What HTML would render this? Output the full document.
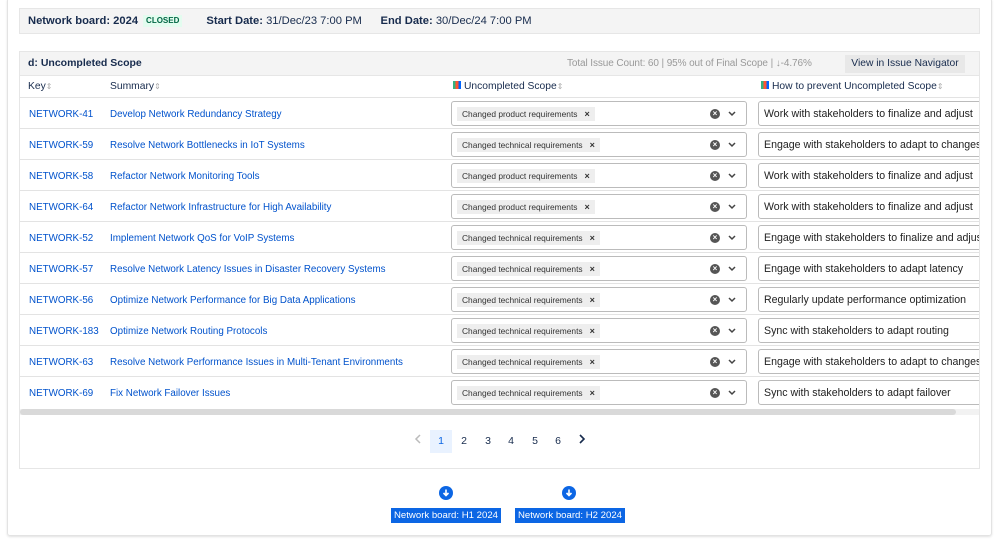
<!DOCTYPE html>
<html><head><style>
*{box-sizing:border-box;margin:0;padding:0}
body{width:999px;height:543px;background:#fff;font-family:"Liberation Sans",sans-serif;font-size:11px;color:#172b4d;position:relative;overflow:hidden}
.card{position:absolute;left:7px;top:-2px;width:985px;height:538px;border:1px solid #e3e3e3;border-radius:3px;box-shadow:0 1px 2px rgba(0,0,0,.12)}
.top{position:absolute;left:19px;top:8px;width:961px;height:26px;background:#f4f4f4;border:1px solid #e6e6e6;font-size:11.2px;line-height:24px;padding-left:8px;white-space:nowrap}
.closed{display:inline-block;background:#e3fcef;color:#006644;font-size:8px;font-weight:bold;padding:0 3px;line-height:12px;margin:0 24px 0 5px;vertical-align:1px}
.sec{position:absolute;left:19px;top:51px;width:961px;height:418px;border:1px solid #e6e6e6;overflow:hidden}
.sh{height:24px;background:#f4f4f4;border-bottom:1px solid #e6e6e6;font-size:10.5px;line-height:23px;padding-left:8px;position:relative}
.tot{position:absolute;left:547px;top:0;color:#999;font-size:10px;letter-spacing:-.1px;white-space:nowrap}
.vin{position:absolute;left:825px;top:3px;width:120px;text-align:center;height:18px;background:#e8e8e8;font-size:10.3px;line-height:18px;color:#172b4d}
.hdr{height:22px;border-bottom:1px solid #e3e3e3;position:relative;font-size:10.3px;line-height:22px}
.hdr span{position:absolute;top:0}
.srt{color:#aaa;font-size:8px;position:static!important}
.row{height:31px;border-bottom:1px solid #e3e3e3;position:relative;font-size:9.8px}
.row .k,.row .s{position:absolute;top:11px;color:#0052cc}
.k{left:9px}.s{left:90px}
.sel{position:absolute;left:431px;top:3px;width:296px;height:25px;border:1px solid #bbb;border-radius:3px}
.tag{position:absolute;left:5px;top:5px;height:14px;background:#eee;font-size:8.4px;line-height:14px;padding:0 5px;color:#333}
.tag b{margin-left:7px;font-size:9px}
.ic{position:absolute;right:26px;top:7px;width:10px;height:10px;border-radius:50%;background:#555;color:#fff;font-size:8px;line-height:10px;text-align:center;font-weight:bold}
.ch{position:absolute;right:10px;top:9px}
.how{position:absolute;left:738px;top:3px;width:240px;height:25px;border:1px solid #bbb;border-radius:3px;font-size:10.6px;padding:6px 0 0 5px;white-space:nowrap;overflow:hidden;color:#222}
.bar{position:absolute;left:0;top:357px;width:961px;height:6px;background:#f2f2f2}
.bar div{width:936px;height:6px;background:#d9d9d9;border-radius:3px}
.pg{position:absolute;top:378px;left:0;width:961px;font-size:10.5px}
.pg span{position:absolute;top:0;width:22px;height:23px;line-height:23px;text-align:center}
.chart{display:inline-block;width:8px;height:8px;background:linear-gradient(90deg,#36b37e 0 33%,#ff5630 33% 66%,#0065ff 66%);margin-right:3px}
.btn{position:absolute;top:508px;height:15px;background:#0c66e4;color:#fff;font-size:9.6px;line-height:15px;padding:0 3px}
.dn{position:absolute;top:486px;width:14px;height:14px;border-radius:50%;background:#0c66e4}
</style></head><body>
<div class="card"></div>
<div class="top"><b style="font-weight:600">Network board: 2024</b><span class="closed">CLOSED</span><b style="font-weight:600">Start Date:</b> 31/Dec/23 7:00 PM &nbsp;&nbsp;&nbsp;&nbsp;&nbsp;<b style="font-weight:600">End Date:</b> 30/Dec/24 7:00 PM</div>
<div class="sec">
<div class="sh"><b style="font-weight:600">d: Uncompleted Scope</b><span class="tot">Total Issue Count: 60 | 95% out of Final Scope | ↓-4.76%</span><span class="vin">View in Issue Navigator</span></div>
<div class="hdr"><span style="left:8px">Key<span class="srt">⇕</span></span><span style="left:90px">Summary<span class="srt">⇕</span></span><span style="left:433px"><i class="chart"></i>Uncompleted Scope<span class="srt">⇕</span></span><span style="left:741px"><i class="chart"></i>How to prevent Uncompleted Scope<span class="srt">⇕</span></span></div>
<div class="row"><span class="k">NETWORK-41</span><span class="s">Develop Network Redundancy Strategy</span><div class="sel"><span class="tag">Changed product requirements<b>×</b></span><span class="ic">×</span><svg class="ch" width="8" height="6"><path d="M1 1l3 3 3-3" stroke="#444" stroke-width="1.5" fill="none"/></svg></div><div class="how">Work with stakeholders to finalize and adjust</div></div>
<div class="row"><span class="k">NETWORK-59</span><span class="s">Resolve Network Bottlenecks in IoT Systems</span><div class="sel"><span class="tag">Changed technical requirements<b>×</b></span><span class="ic">×</span><svg class="ch" width="8" height="6"><path d="M1 1l3 3 3-3" stroke="#444" stroke-width="1.5" fill="none"/></svg></div><div class="how">Engage with stakeholders to adapt to changes</div></div>
<div class="row"><span class="k">NETWORK-58</span><span class="s">Refactor Network Monitoring Tools</span><div class="sel"><span class="tag">Changed product requirements<b>×</b></span><span class="ic">×</span><svg class="ch" width="8" height="6"><path d="M1 1l3 3 3-3" stroke="#444" stroke-width="1.5" fill="none"/></svg></div><div class="how">Work with stakeholders to finalize and adjust</div></div>
<div class="row"><span class="k">NETWORK-64</span><span class="s">Refactor Network Infrastructure for High Availability</span><div class="sel"><span class="tag">Changed product requirements<b>×</b></span><span class="ic">×</span><svg class="ch" width="8" height="6"><path d="M1 1l3 3 3-3" stroke="#444" stroke-width="1.5" fill="none"/></svg></div><div class="how">Work with stakeholders to finalize and adjust</div></div>
<div class="row"><span class="k">NETWORK-52</span><span class="s">Implement Network QoS for VoIP Systems</span><div class="sel"><span class="tag">Changed technical requirements<b>×</b></span><span class="ic">×</span><svg class="ch" width="8" height="6"><path d="M1 1l3 3 3-3" stroke="#444" stroke-width="1.5" fill="none"/></svg></div><div class="how">Engage with stakeholders to finalize and adjust</div></div>
<div class="row"><span class="k">NETWORK-57</span><span class="s">Resolve Network Latency Issues in Disaster Recovery Systems</span><div class="sel"><span class="tag">Changed technical requirements<b>×</b></span><span class="ic">×</span><svg class="ch" width="8" height="6"><path d="M1 1l3 3 3-3" stroke="#444" stroke-width="1.5" fill="none"/></svg></div><div class="how">Engage with stakeholders to adapt latency</div></div>
<div class="row"><span class="k">NETWORK-56</span><span class="s">Optimize Network Performance for Big Data Applications</span><div class="sel"><span class="tag">Changed technical requirements<b>×</b></span><span class="ic">×</span><svg class="ch" width="8" height="6"><path d="M1 1l3 3 3-3" stroke="#444" stroke-width="1.5" fill="none"/></svg></div><div class="how">Regularly update performance optimization</div></div>
<div class="row"><span class="k">NETWORK-183</span><span class="s">Optimize Network Routing Protocols</span><div class="sel"><span class="tag">Changed technical requirements<b>×</b></span><span class="ic">×</span><svg class="ch" width="8" height="6"><path d="M1 1l3 3 3-3" stroke="#444" stroke-width="1.5" fill="none"/></svg></div><div class="how">Sync with stakeholders to adapt routing</div></div>
<div class="row"><span class="k">NETWORK-63</span><span class="s">Resolve Network Performance Issues in Multi-Tenant Environments</span><div class="sel"><span class="tag">Changed technical requirements<b>×</b></span><span class="ic">×</span><svg class="ch" width="8" height="6"><path d="M1 1l3 3 3-3" stroke="#444" stroke-width="1.5" fill="none"/></svg></div><div class="how">Engage with stakeholders to adapt to changes</div></div>
<div class="row" style="border-bottom:none"><span class="k">NETWORK-69</span><span class="s">Fix Network Failover Issues</span><div class="sel"><span class="tag">Changed technical requirements<b>×</b></span><span class="ic">×</span><svg class="ch" width="8" height="6"><path d="M1 1l3 3 3-3" stroke="#444" stroke-width="1.5" fill="none"/></svg></div><div class="how">Sync with stakeholders to adapt failover</div></div>
<div class="bar"><div></div></div>
<div class="pg"><span style="left:387px"><svg width="8" height="10"><path d="M6 1L2 5l4 4" stroke="#bbb" stroke-width="1.5" fill="none"/></svg></span><span style="left:410px;background:#e9f2ff;color:#0c66e4">1</span><span style="left:433px">2</span><span style="left:457px">3</span><span style="left:480px">4</span><span style="left:504px">5</span><span style="left:527px">6</span><span style="left:551px"><svg width="8" height="10"><path d="M2 1l4 4-4 4" stroke="#172b4d" stroke-width="1.6" fill="none"/></svg></span></div>
</div>
<div class="dn" style="left:439px"><svg width="14" height="14"><path d="M7 3.5v6M4.5 7L7 9.5 9.5 7" stroke="#fff" stroke-width="1.6" fill="none"/></svg></div>
<div class="dn" style="left:562px"><svg width="14" height="14"><path d="M7 3.5v6M4.5 7L7 9.5 9.5 7" stroke="#fff" stroke-width="1.6" fill="none"/></svg></div>
<div class="btn" style="left:391px">Network board: H1 2024</div>
<div class="btn" style="left:515px">Network board: H2 2024</div>
</body></html>
